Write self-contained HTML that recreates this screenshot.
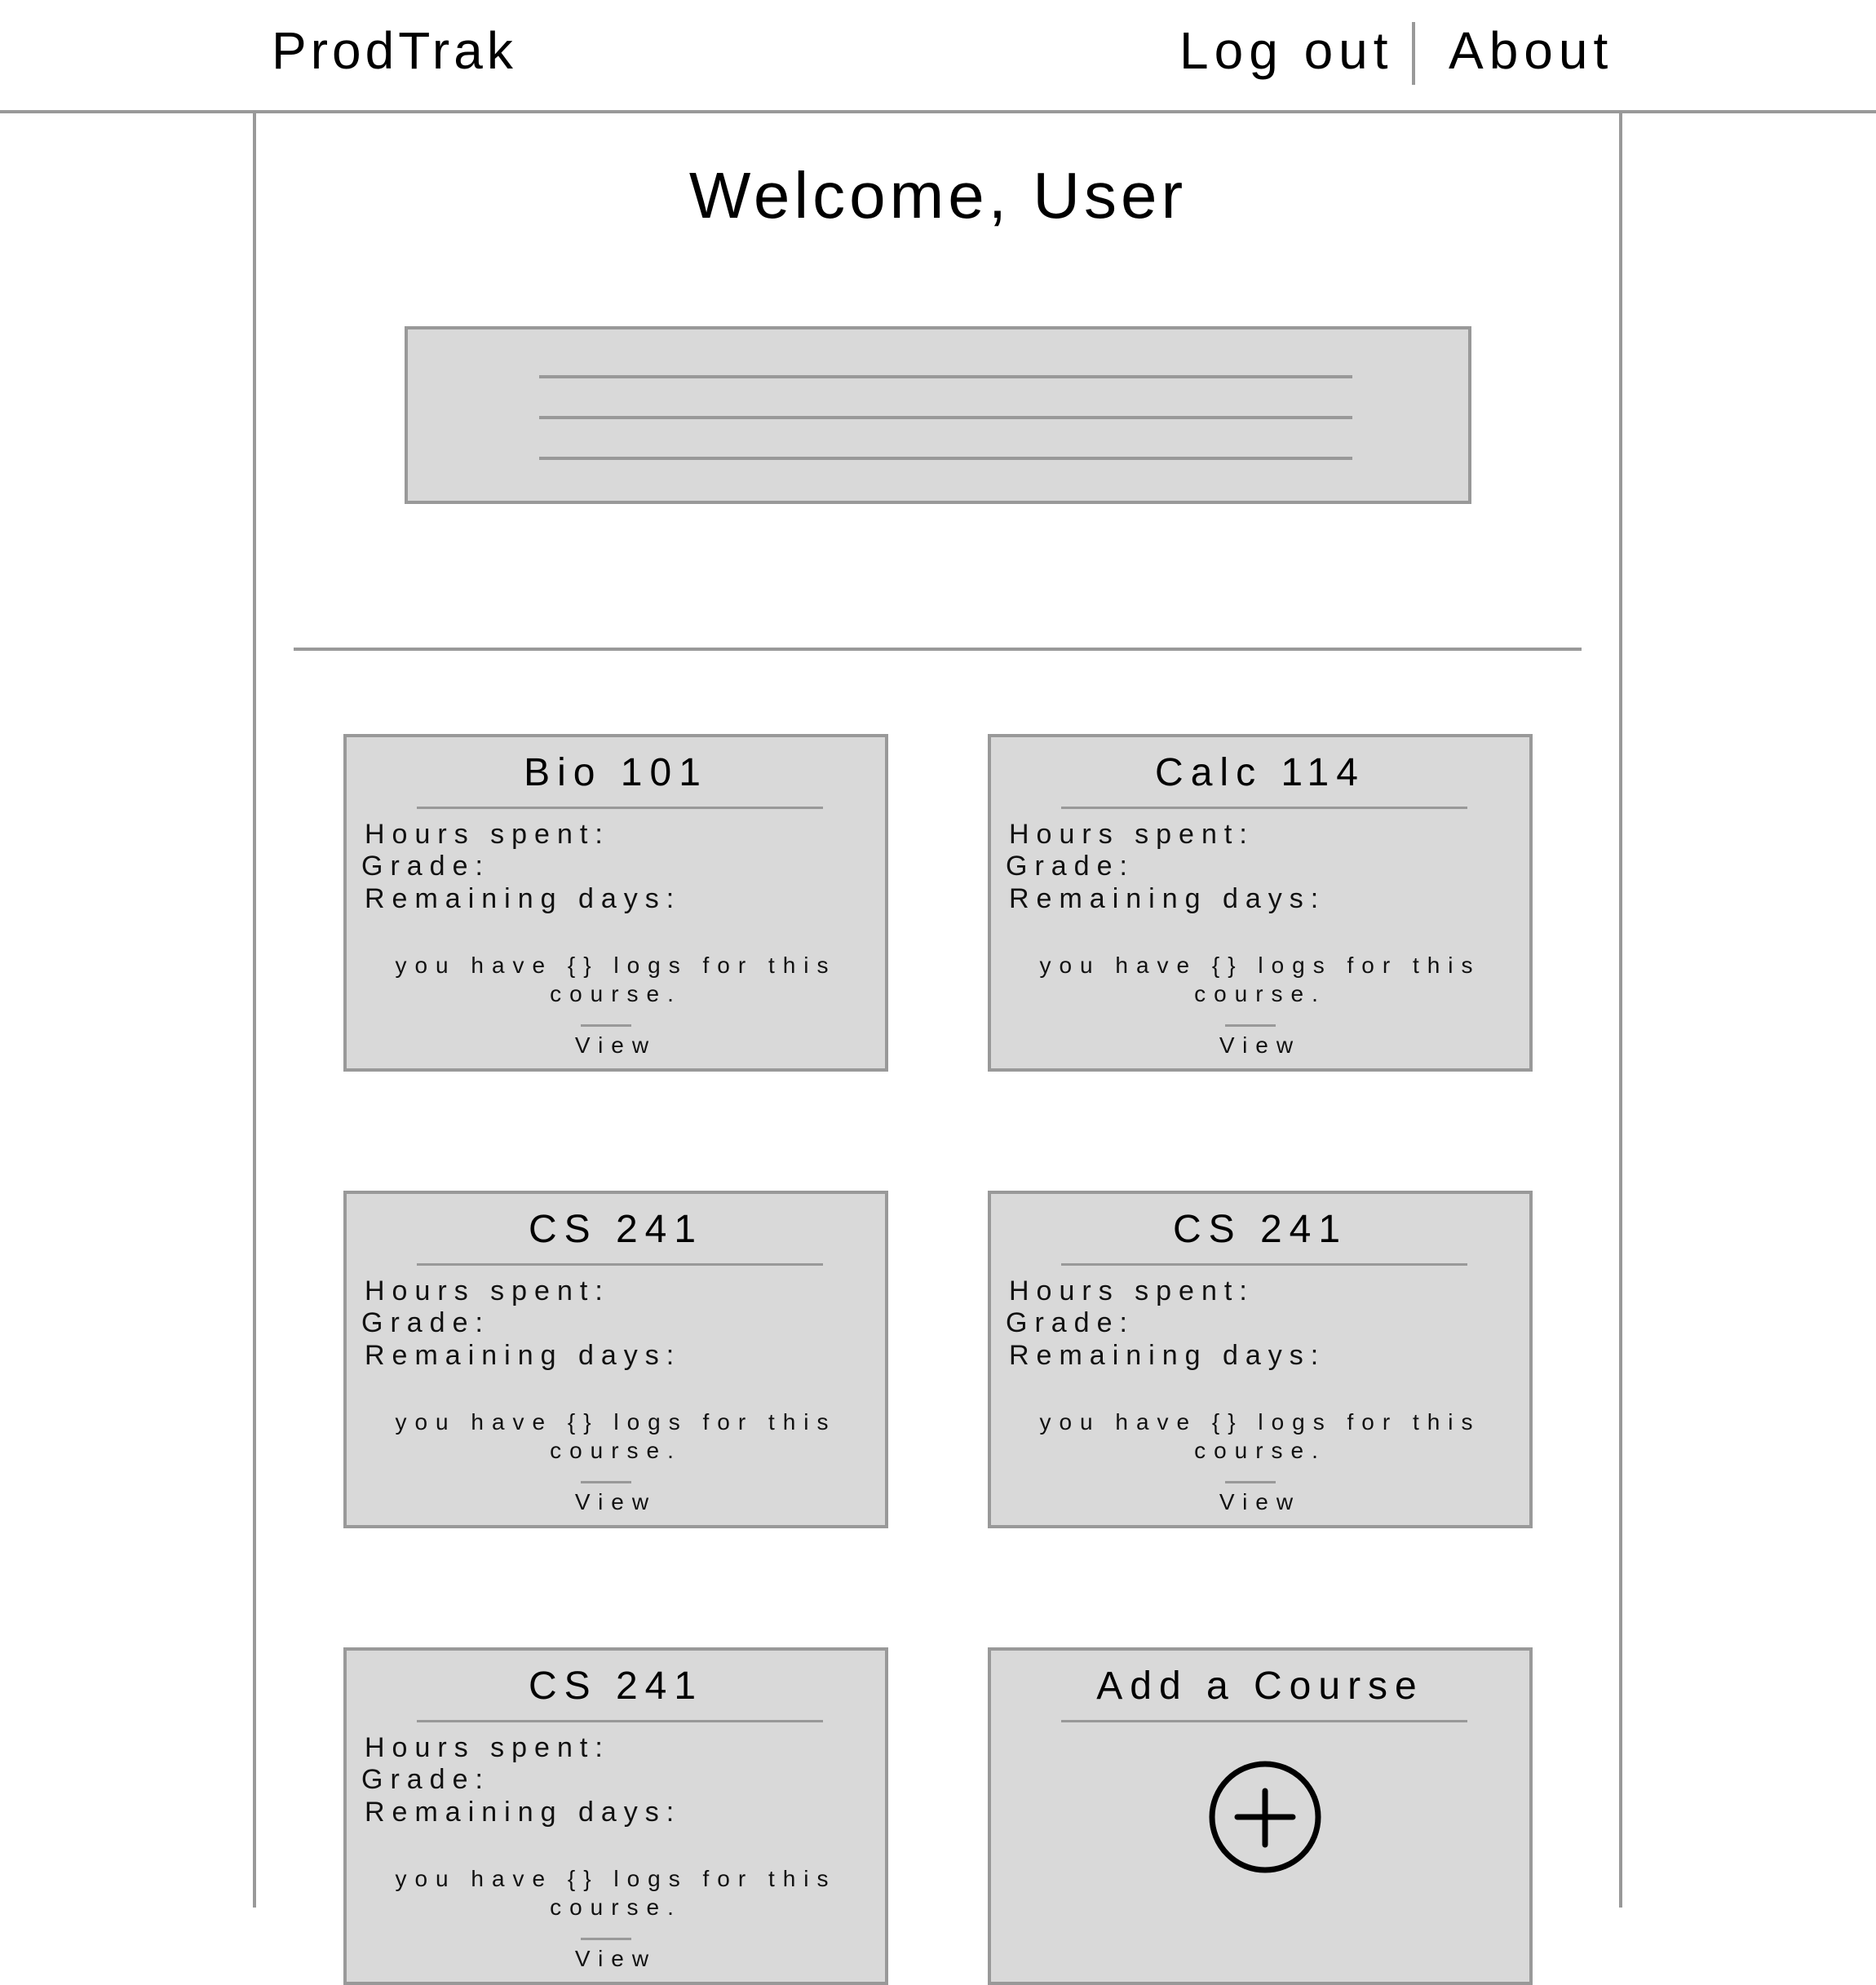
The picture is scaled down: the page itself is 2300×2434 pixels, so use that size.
<!DOCTYPE html>
<html><head><meta charset="utf-8"><style>
body{margin:0;width:2300px;height:2330px;background:#fff;position:relative;overflow:hidden;font-family:"Liberation Sans",sans-serif;color:#000}
.a{position:absolute;white-space:nowrap}
.hd{font-size:64px;line-height:80px;top:22px}
.card{position:absolute;width:660px;height:406px;border:4px solid #999;background:#d9d9d9}
.card .t{position:absolute;left:0;right:0;text-align:center;font-size:48px;letter-spacing:9px;line-height:60px;top:14px}
.card .u{position:absolute;left:86px;width:498px;top:85px;height:3px;background:#999}
.card .l{position:absolute;font-size:34px;letter-spacing:9px;line-height:40px;color:#111}
.card .c{position:absolute;left:0;right:0;text-align:center;font-size:28px;letter-spacing:10px;line-height:35px;color:#111}
.card .s{position:absolute;left:287px;width:62px;top:352px;height:3px;background:#999}
</style></head><body>
<div class="a hd" style="left:333px;letter-spacing:5px">ProdTrak</div>
<div class="a hd" style="left:1446px;letter-spacing:7px">Log out</div>
<div class="a" style="left:1731px;top:27px;width:4px;height:77px;background:#999"></div>
<div class="a hd" style="left:1776px;letter-spacing:7px">About</div>
<div class="a" style="left:0;top:135px;width:2300px;height:4px;background:#999"></div>
<div class="a" style="left:310px;top:139px;width:4px;height:2200px;background:#999"></div>
<div class="a" style="left:1985px;top:139px;width:4px;height:2200px;background:#999"></div>
<div class="a" style="left:0;width:2300px;text-align:center;top:192px;font-size:80px;line-height:96px;letter-spacing:5px">Welcome, User</div>
<div class="a" style="left:496px;top:400px;width:1300px;height:210px;border:4px solid #999;background:#d9d9d9"></div>
<div class="a" style="left:661px;top:460px;width:997px;height:4px;background:#999"></div>
<div class="a" style="left:661px;top:510px;width:997px;height:4px;background:#999"></div>
<div class="a" style="left:661px;top:560px;width:997px;height:4px;background:#999"></div>
<div class="a" style="left:360px;top:794px;width:1579px;height:4px;background:#999"></div>

<div class="card" style="left:421px;top:900px"><div class="t">Bio 101</div><div class="u"></div>
<div class="l" style="left:22px;top:99px">Hours spent:</div><div class="l" style="left:18px;top:138px">Grade:</div><div class="l" style="left:22px;top:178px">Remaining days:</div>
<div class="c" style="top:262px">you have {} logs for this</div><div class="c" style="top:297px">course.</div><div class="s"></div><div class="c" style="top:360px">View</div></div>

<div class="card" style="left:1211px;top:900px"><div class="t">Calc 114</div><div class="u"></div>
<div class="l" style="left:22px;top:99px">Hours spent:</div><div class="l" style="left:18px;top:138px">Grade:</div><div class="l" style="left:22px;top:178px">Remaining days:</div>
<div class="c" style="top:262px">you have {} logs for this</div><div class="c" style="top:297px">course.</div><div class="s"></div><div class="c" style="top:360px">View</div></div>

<div class="card" style="left:421px;top:1460px"><div class="t">CS 241</div><div class="u"></div>
<div class="l" style="left:22px;top:99px">Hours spent:</div><div class="l" style="left:18px;top:138px">Grade:</div><div class="l" style="left:22px;top:178px">Remaining days:</div>
<div class="c" style="top:262px">you have {} logs for this</div><div class="c" style="top:297px">course.</div><div class="s"></div><div class="c" style="top:360px">View</div></div>

<div class="card" style="left:1211px;top:1460px"><div class="t">CS 241</div><div class="u"></div>
<div class="l" style="left:22px;top:99px">Hours spent:</div><div class="l" style="left:18px;top:138px">Grade:</div><div class="l" style="left:22px;top:178px">Remaining days:</div>
<div class="c" style="top:262px">you have {} logs for this</div><div class="c" style="top:297px">course.</div><div class="s"></div><div class="c" style="top:360px">View</div></div>

<div class="card" style="left:421px;top:2020px"><div class="t">CS 241</div><div class="u"></div>
<div class="l" style="left:22px;top:99px">Hours spent:</div><div class="l" style="left:18px;top:138px">Grade:</div><div class="l" style="left:22px;top:178px">Remaining days:</div>
<div class="c" style="top:262px">you have {} logs for this</div><div class="c" style="top:297px">course.</div><div class="s"></div><div class="c" style="top:360px">View</div></div>

<div class="card" style="left:1211px;top:2020px"><div class="t">Add a Course</div><div class="u"></div>
<svg style="position:absolute;left:266px;top:134px" width="140" height="140" viewBox="0 0 140 140"><circle cx="70" cy="70" r="65" fill="none" stroke="#000" stroke-width="7"/><path d="M36 70H104M70 38V104" stroke="#000" stroke-width="7" stroke-linecap="round"/></svg>
</div>
</body></html>
